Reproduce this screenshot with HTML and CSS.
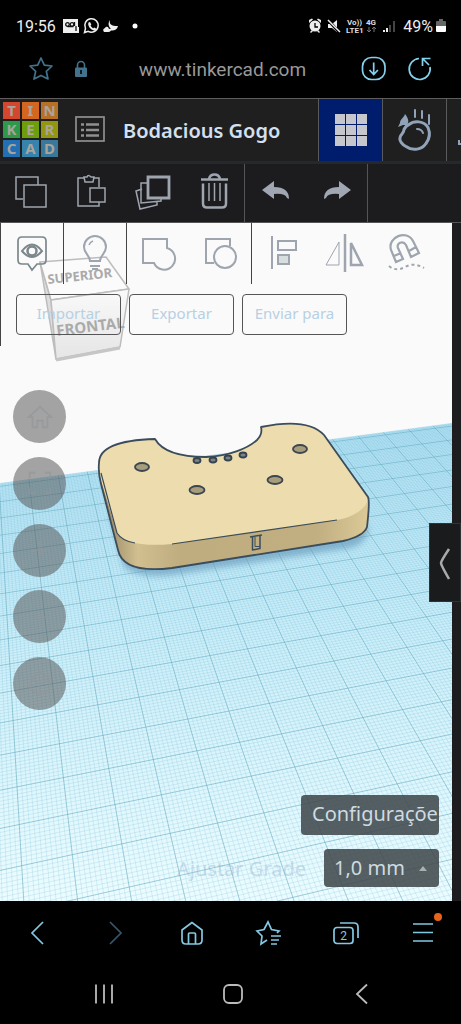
FILE: index.html
```html
<!DOCTYPE html>
<html lang="pt-BR">
<head>
<meta charset="utf-8">
<meta name="viewport" content="width=device-width, initial-scale=1">
<title>Bodacious Gogo</title>
<link rel="stylesheet" href="styles.css">
</head>
<body>
<div class="phone">
  <div class="status">
    <span class="clock">19:56</span>
    <svg class="status-left" viewBox="0 0 76 18" width="76" height="18">
      <path fill="#eee" d="M1 2h15v8h1v6H1z"/>
      <g fill="none" stroke="#111" stroke-width="1.3"><circle cx="5.500" cy="7.500" r="1.800"/><circle cx="10" cy="7.500" r="1.800"/><path d="M5.500 9.500h6M12.500 5v4M14 9v5"/></g>
      <g fill="none" stroke="#eee" stroke-width="1.500"><path d="M22.500 15.500l1-4a6.700 6.700 0 1 1 2.700 2.800z"/></g>
      <path fill="#eee" d="M26.500 5.500l1.500-.5 1.300 2.500-.8 1c.6 1.200 1.400 2 2.700 2.700l1-.8 2.300 1.300c-.3 1.600-1.500 2-2.700 1.700-3-.8-5.500-4-5.600-6.500z"/>
      <path fill="#eee" d="M48 3c-1 4 1 6 8 6-1 4-4 5-7 4.500q-1 1.500-3 1.500h-4q-2-3 1-4 1-2 3-1l1 2 2-.5c-3-2-3-6-1-8.500z"/>
      <circle cx="73" cy="9" r="2.500" fill="#fff"/>
    </svg>
    <svg class="status-right" viewBox="0 0 90 20" width="90" height="20">
      <g fill="#eee"><circle cx="8" cy="10" r="5.500"/><path d="M2 7V4l3-1.500 1 1zM14 7V4l-3-1.500-1 1zM3 16l2-2 1 1-2 2zM13 16l-2-2-1 1 2 2z"/></g>
      <path d="M8 7v4h3" fill="none" stroke="#000" stroke-width="1.300"/>
      <path fill="#eee" d="M21 8h4l5-4v12l-5-4h-4z"/><path d="M20 3l13 14" stroke="#000" stroke-width="3"/><path d="M21 4l12 12" stroke="#eee" stroke-width="1.500"/>
      <g class="tiny"><text x="40" y="9">Vo))</text><text x="39" y="17">LTE1</text><text x="59" y="9">4G</text></g>
      <path d="M62 11v5m-2-2 2 2 2-2M67 16v-5m-2 2 2-2 2 2" stroke="#777" fill="none"/>
      <g stroke-width="2"><path d="M77 16v-2M80 16v-4" stroke="#eee"/><path d="M83 16V9M87 16V5" stroke="#444"/></g>
    </svg>
    <span class="charge">49%</span>
    <svg viewBox="0 0 10 14" width="10" height="14"><path fill="#666" d="M0 3q0-1 1-1h2V0h4v2h2q1 0 1 1v4H0z"/><path fill="#fff" d="M0 7h10v5q0 1-1 1H1q-1 0-1-1z"/></svg>
  </div>

  <div class="address">
    <button aria-label="Favorito"><svg viewBox="0 0 26 26" width="26" height="26"><path d="M13 2l3.300 7.200 7.700.8-5.700 5.300L20 23l-7-3.600L6 23l1.700-7.700L2 10l7.700-.8z" fill="none" stroke="#42728c" stroke-width="1.700" stroke-linejoin="round"/></svg></button>
    <button aria-label="Segurança"><svg viewBox="0 0 14 18" width="14" height="18"><path d="M3.500 9V5a3.500 3.500 0 0 1 7 0v4" fill="none" stroke="#42728c" stroke-width="1.600"/><rect x="1" y="7.500" width="12" height="9.500" rx="1" fill="#42728c"/><path d="M7 10v4" stroke="#000" stroke-width="1.500"/></svg></button>
    <input class="url" type="text" aria-label="Endereço" value="www.tinkercad.com">
    <button aria-label="Baixar"><svg viewBox="0 0 26 26" width="26" height="26"><g fill="none" stroke="#85d2ee" stroke-width="1.700"><rect x="1.500" y="1.500" width="22.500" height="22" rx="9"/><path d="M12.700 6.500v12M8.500 14l4.200 4.500 4.200-4.500"/></g></svg></button>
    <button aria-label="Recarregar"><svg viewBox="0 0 26 26" width="26" height="26"><g fill="none" stroke="#85d2ee" stroke-width="1.700"><path d="M12 2.500A10.500 10.500 0 1 0 23 11M15.500 10V2.500h8M16 3l6 6"/></g></svg></button>
  </div>

  <header class="header">
    <a class="logo" href="#" aria-label="Tinkercad">
      <span class="t1">T</span><span class="t2">I</span><span class="t3">N</span>
      <span class="t4">K</span><span class="t5">E</span><span class="t6">R</span>
      <span class="t7">C</span><span class="t8">A</span><span class="t9">D</span>
    </a>
    <button class="list" aria-label="Projetos"><svg viewBox="0 0 30 28" width="30" height="28"><g fill="none" stroke="#909090" stroke-width="1.700"><rect x="1" y="2" width="28" height="24"/><path d="M11 9.500h13M11 15h13M11 20.500h13M6 9.500h3M6 15h3M6 20.500h3" stroke-width="2.600"/></g></svg></button>
    <h1>Bodacious Gogo</h1>
    <button class="mode on" aria-label="Projeto 3D"><svg viewBox="0 0 32 32" width="32" height="32"><path fill="#c5c7cd" d="M0 0h10v10H0zM11 0h10v10H11zM22 0h10v10H22zM0 11h10v10H0zM11 11h10v10H11zM22 11h10v10H22zM0 22h10v10H0zM11 22h10v10H11zM22 22h10v10H22z"/></svg></button>
    <button class="mode" aria-label="Laboratório"><svg viewBox="0 0 36 46" width="36" height="46"><g fill="none" stroke="#91a3b9" stroke-width="3" stroke-linecap="round"><path d="M12 17.500c5-4 15-4 19 3 3 7 1 12-2 16-4 6-13 8-20 3-4-2-7-6-6-9 1-4 4-4 4-8 1-2 2-4 5-5z"/><path d="M20 22c3 0 5 1 6 4" stroke-width="2"/><path d="M18 3v7M25 4v7M32 8v9" stroke-width="2"/></g><path fill="#91a3b9" d="M8 7c4 5 4 8 2 11H6l-5 2 2-4c0-4 4-5 5-9z"/></svg></button>
    <span class="next"><svg viewBox="0 0 14 46" width="14" height="46"><path d="M12 33v4h2" fill="none" stroke="#91a3b9" stroke-width="2"/></svg></span>
  </header>

  <div class="toolbar">
    <div class="group">
      <button class="tool" aria-label="Copiar"><svg viewBox="0 0 36 36"><path d="M10 25H3V3h22v8M11 11h22v22H11z" stroke-width="1.500"/></svg></button>
      <button class="tool" aria-label="Colar"><svg viewBox="0 0 36 36"><path d="M10 4H4v28h21v-4M20 4h5v9M10 3h3q1-3 4 0h3l-1 5h-8zM16 14h15v14H16z" stroke-width="1.500"/></svg></button>
      <button class="tool" aria-label="Duplicar"><svg viewBox="0 0 36 36"><path d="M13 3h21v21H13z" stroke-width="2.800"/><path d="M12 9H6v20l20-2v-2M7 15l-6 2 4 18 17-4v-3" stroke-width="1.500"/></svg></button>
      <button class="tool" aria-label="Excluir"><svg viewBox="0 0 36 36"><path d="M5 5.500h27M13 5q1-4.500 5.500-4.500T24 5" stroke-width="2.500"/><path d="M7 9.500v20q0 4 4 4h15q4 0 4-4v-20" stroke-width="2.500"/><path d="M13 9v18M18.500 9v18M24 9v18" stroke-width="1.500"/></svg></button>
    </div>
    <div class="group">
      <button class="tool" aria-label="Desfazer"><svg viewBox="0 0 36 36"><path fill="#a0a7b3" stroke="none" d="M4 16L16 7v6q15 0 15 12l-2-1q-2-5-13-4v5z"/></svg></button>
      <button class="tool" aria-label="Refazer"><svg viewBox="0 0 36 36"><path fill="#a0a7b3" stroke="none" d="M32 16L20 7v6Q5 13 5 25l2-1q2-5 13-4v5z"/></svg></button>
    </div>
  </div>

  <main class="workspace">
    <svg class="scene" viewBox="0 223 452 678" preserveAspectRatio="xMidYMid slice" role="img" aria-label="Plano de trabalho">
      <defs>
        <linearGradient id="plane" x1="0" y1="430" x2="0" y2="900" gradientUnits="userSpaceOnUse"><stop offset="0" stop-color="#b4e3f6"/><stop offset=".4" stop-color="#c9eefa"/><stop offset="1" stop-color="#ebfcff"/></linearGradient>
        <linearGradient id="side" x1="100" x2="370" gradientUnits="userSpaceOnUse" y1="0" y2="0"><stop offset="0" stop-color="#8f8060"/><stop offset=".14" stop-color="#d2bf90"/><stop offset=".3" stop-color="#bfac7f"/><stop offset=".8" stop-color="#c1ae81"/><stop offset="1" stop-color="#ddca98"/></linearGradient>
        <linearGradient id="cube" x1="0" x2="0" y1="0" y2="1"><stop offset="0" stop-color="#fafafa"/><stop offset="1" stop-color="#e5e5e5"/></linearGradient>
        <filter id="soft"><feGaussianBlur stdDeviation="3"/></filter>
      </defs>
      <rect x="-400" y="0" width="1200" height="1200" fill="#fafafa"/>
      <path id="ground" fill="url(#plane)"/>
      <path id="minor" fill="none" stroke="#6db4cf" stroke-opacity=".2" stroke-width="1"/>
      <path id="major" fill="none" stroke="#5ba4b9" stroke-opacity=".55" stroke-width="1"/>

      <path d="M110 515L124 567Q140 579 172 575L350 548Q369 543 368 525" fill="#6b9dbd" opacity=".7" filter="url(#soft)"/>
      <path d="M99 464L120 500L340 490L368 496Q370 500 368 527Q366 537 343 541L172 568Q123 575 118 550L101 484Z" fill="url(#side)"/>
      <path d="M99 463C99 448 118 440 155 439C163 453 185 457 206 457C230 456 248 448 257 440C262 435 262 431 261 427C290 421 312 422 324 435L368 497C368 508 354 517 337 520L172 544Q128 548 117 533L103 487Q98 474 99 463Z" fill="#ecdcae"/>
      <g fill="none" stroke="#3b4c5b" stroke-width="1.800" stroke-linejoin="round">
        <path d="M99 463C99 448 118 440 155 439C163 453 185 457 206 457C230 456 248 448 257 440C262 435 262 431 261 427C290 421 312 422 324 435L368 497Q370 501 367 527Q364 536 343 541L172 568Q123 574 118 550L101 484Q98 472 99 463Z"/>
        <path d="M101 473L117 533Q122 541 135 543M172 544L337 520" stroke-width="1.200"/>
        <path d="M250 537l12-2M252.500 537v13l7.500-1.500V536" stroke-width="1.500"/>
        <path d="M255 537v9.500h5" stroke-width="1"/>
      </g>
      <g fill="#a79d7b" stroke="#3b4650" stroke-width="1.800">
        <ellipse cx="142" cy="467" rx="7" ry="4"/><ellipse cx="197" cy="490" rx="7.500" ry="4"/><ellipse cx="275" cy="480" rx="7.500" ry="4"/><ellipse cx="300" cy="449" rx="7" ry="4"/>
      </g>
      <g fill="#7b8184" stroke="#34444f" stroke-width="1.800">
        <ellipse cx="197" cy="460.500" rx="3.500" ry="2.500"/><ellipse cx="213" cy="460" rx="3.500" ry="2.500"/><ellipse cx="228" cy="458" rx="3.500" ry="2.500"/><ellipse cx="243" cy="455" rx="3.500" ry="2.500"/>
      </g>

      <g stroke="#bdbdbd" stroke-width="1.500" stroke-linejoin="round">
        <path d="M40 262L51 300L56 359Z" fill="#ddd"/>
        <path d="M40 262L106 257L129 289L51 300Z" fill="#fbfbfb"/>
        <path d="M51 300L129 289L120 347L56 359Z" fill="url(#cube)"/>
        <path d="M56 360L120 348" stroke="#c6c6c6" stroke-width="3"/>
      </g>
      <g class="cube-text">
        <text x="48" y="284" font-size="13" transform="rotate(-6 48 284)">SUPERIOR</text>
        <text x="57" y="336" font-size="15" transform="rotate(-7 57 336)">FRONTAL</text>
      </g>
    </svg>

    <div class="overlay">
      <div class="edit">
        <div class="cell line"><button class="tool" aria-label="Mostrar"><svg viewBox="0 0 36 36"><g stroke="#7b878c"><path d="M8 1h20q4 0 4 4v19q0 4-4 4h-5l-5 6-4-6H8q-4 0-4-4V5q0-4 4-4z" stroke-width="1.700"/><path d="M8 15q10-13 20 0-10 12-20 0z" stroke-width="2"/><circle cx="18" cy="15" r="4.500" stroke-width="2.500"/></g></svg></button></div>
        <div class="cell line"><button class="tool" aria-label="Luz"><svg viewBox="0 0 36 36"><path d="M13 25c0-6-6-7-6-14a11 11 0 0 1 22 0c0 7-6 8-6 14zM13 30h10M15 33h6" stroke-width="2"/><path d="M12 9q1-3 4-4" stroke-width="1.500"/></svg></button></div>
        <div class="cell line"><button class="tool" aria-label="Agrupar"><svg viewBox="0 0 36 36"><path d="M3 3h24v9a11 11 0 1 1-13 15H3z" stroke-width="2"/></svg></button>
        <button class="tool" aria-label="Desagrupar"><svg viewBox="0 0 36 36"><path d="M12 27H4V3h24v7" stroke-width="2"/><circle cx="23" cy="21" r="11" stroke-width="2"/></svg></button></div>
        <div class="cell"><button class="tool" aria-label="Alinhar"><svg viewBox="0 0 36 36"><path d="M7 0v33" stroke-width="2"/><path d="M13 5h18v9H13z" stroke-width="2"/><path d="M13 19h11v9H13z" fill="#d8dde0" stroke-width="2"/></svg></button>
        <button class="tool wide" aria-label="Espelhar"><svg viewBox="0 0 40 40"><path d="M14 8v23H1z" stroke-width="1"/><path d="M20 0v38" stroke-width="2.500"/><path d="M26 9v22h11z" stroke-width="2.500"/></svg></button>
        <button class="tool wide" aria-label="Ímã"><svg viewBox="0 0 40 40"><path d="M9 28L4 16C0 3 20-5 26 7l6 12-8 4-5-12c-3-5-10-2-8 3l5 11zM7 22l7-3M22 17l7-4" stroke-width="2.200"/><path d="M2 32q7 6 16 1t19 1" stroke-width="2" stroke-dasharray="3 3"/></svg></button></div>
      </div>
      <div class="actions"><button>Importar</button><button>Exportar</button><button>Enviar para</button></div>
      <div class="views">
        <button aria-label="Início"><svg viewBox="0 0 28 28"><path d="M2 14L14 3l12 11h-4v11h-5v-7h-6v7H6V14z"/></svg></button>
        <button aria-label="Ajustar"><svg viewBox="0 0 28 28"><path d="M3 9V3h6M19 3h6v6M25 19v6h-6M9 25H3v-6"/></svg></button>
        <button aria-label="Aproximar"><svg viewBox="0 0 28 28"><path d="M4 14h20M14 4v20"/></svg></button>
        <button aria-label="Afastar"><svg viewBox="0 0 28 28"><path d="M4 14h20"/></svg></button>
        <button aria-label="Perspectiva"><svg viewBox="0 0 28 28"><path d="M14 2l10 6v12l-10 6-10-6V8zM4 8l10 6 10-6M14 14v12"/></svg></button>
      </div>
      <div class="settings">
        <button class="config">Configuraçõe</button>
        <div class="snap">
          <label for="grid">Ajustar Grade</label>
          <div class="select"><select id="grid"><option>1,0 mm</option></select><svg viewBox="0 0 8 5" width="8" height="5"><path d="M0 5l4-5 4 5z" fill="#a9b0b3"/></svg></div>
        </div>
      </div>
    </div>
    <div class="rail"></div>
    <button class="drawer" aria-label="Abrir painel"><svg viewBox="0 0 14 36" width="14" height="36"><path d="M11 4Q3 16 3 18t8 16" fill="none" stroke="#aaa" stroke-width="2.500"/></svg></button>
  </main>

  <nav class="browser">
    <button aria-label="Voltar"><svg viewBox="0 0 28 28"><path d="M19 3L8 14l11 11"/></svg></button>
    <button class="dim" aria-label="Avançar"><svg viewBox="0 0 28 28"><path d="M9 3l11 11L9 25"/></svg></button>
    <button aria-label="Página inicial"><svg viewBox="0 0 28 28"><path d="M14 3.500L4 11v10q0 4 4 4h12q4 0 4-4V11zM10.500 25V15q0-1 1-1h5q1 0 1 1v10"/></svg></button>
    <button aria-label="Favoritos"><svg viewBox="0 0 28 28"><path d="M12 21l-6 4 1-8-5-5 7-1.500L13 3l3.500 7.500L24 12l-2 2M16 17h10M16 21h8M16 25h6"/></svg></button>
    <button aria-label="Abas"><svg viewBox="0 0 28 28"><rect x="2" y="8.500" width="19" height="16" rx="3"/><path d="M8 4h14q4 0 4 4v11"/><text x="11.500" y="21">2</text></svg></button>
    <button aria-label="Menu"><svg class="menu" viewBox="0 0 28 28"><path d="M4 5h20M4 13.500h20M4 22h20"/><circle cx="29" cy="-2" r="4"/></svg></button>
  </nav>
  <nav class="system">
    <button aria-label="Recentes"><svg viewBox="0 0 24 24"><path d="M4 2.500v19M12 2.500v19M20 2.500v19"/></svg></button>
    <button aria-label="Início do sistema"><svg viewBox="0 0 24 24"><rect x="3" y="3" width="18" height="18" rx="5"/></svg></button>
    <button aria-label="Voltar do sistema"><svg viewBox="0 0 24 24"><path d="M17 2.500L7 12l10 9.500"/></svg></button>
  </nav>
</div>
<script src="grid.js"></script>
</body>
</html>
```
FILE: styles.css
```css
* { box-sizing: border-box; }
body { margin: 0; background: #000; font-family: "Noto Sans", "Open Sans", sans-serif; }
button { margin: 0; padding: 0; border: 0; background: none; color: inherit; font: inherit; }
svg { display: block; overflow: visible; }
.phone { min-height: 100vh; display: flex; flex-direction: column; overflow: hidden; }

.status { display: flex; align-items: center; height: 52px; padding: 0 15px 0 16px; color: #eee; font: 16px Roboto, sans-serif; }
.status-left { margin-left: 6px; }
.status-right { margin-left: auto; margin-right: 6px; }
.charge { margin-right: 3px; }
.tiny { font: bold 8px Roboto, sans-serif; fill: #ddd; }

.address { display: flex; align-items: center; height: 46px; padding: 0 28px; padding-bottom: 12px; }
.address button + button { margin-left: 20px; }
.url { flex: 1; min-width: 0; margin: 0 16px 0 12px; border: 0; padding: 0; background: none; color: #999; font: 19px Roboto, sans-serif; text-align: center; }

.header { display: flex; height: 63px; border-top: 1px solid #5e5e5e; background: #1f1f20; }
.logo { display: grid; grid-template-columns: repeat(3, 17px); grid-auto-rows: 17px; gap: 2px; padding: 3px; text-decoration: none; font: bold 15px/17px "Noto Sans", sans-serif; text-align: center; color: #a9a49c; }
.t1 { background: #d3472f; } .t2 { background: #d4661f; } .t3 { background: #b87026; }
.t4 { background: #2d9a4b; } .t5 { background: #6d9e0b; } .t6 { background: #93960f; }
.t7 { background: #2270b3; } .t8 { background: #3683ad; } .t9 { background: #39789a; }
.list { margin: 0 18px 2px 14px; }
.header h1 { flex: 1; align-self: center; margin: 0; color: #d2e0f0; font-size: 20px; font-weight: 600; white-space: nowrap; }
.mode { display: grid; place-items: center; width: 64px; border-left: 1px solid #5a5a5c; }
.on { background: #001c6c; }
.next { display: grid; align-items: center; width: 15px; border-left: 1px solid #5a5a5c; }

.toolbar { display: flex; height: 62px; background: #1c1c1f; border-top: 3px solid #25282c; border-bottom: 1px solid #555; }
.group { display: flex; border-right: 1px solid #555558; }
.group .tool { width: 61px; }
.group .tool svg { margin-bottom: 2px; }
.tool { display: grid; place-items: center; width: 62px; }
.tool svg { width: 36px; height: 36px; fill: none; stroke: #9ea5ae; }
.tool.wide svg { width: 40px; height: 40px; }

.workspace { position: relative; flex: 1; display: grid; grid-template-columns: 1fr 9px; min-height: 678px; }
.scene { grid-area: 1 / 1; width: 100%; height: 100%; min-height: 0; overflow: hidden; }
.overlay { grid-area: 1 / 1; z-index: 1; display: flex; flex-direction: column; min-width: 0; }
.rail { grid-area: 1 / 2; background: #1d1d1f; z-index: 1; }
.cube-text { fill: #aaa; font-family: "Noto Sans", sans-serif; font-weight: 700; }
.edit { display: flex; height: 61px; border-left: 1px solid #444; }
.cell { display: flex; }
.line { border-right: 1px solid #444; }
.cell .tool { height: 61px; }
.actions { display: flex; gap: 8px; height: 62px; padding: 10px 15px 11px; border-left: 1px solid #444; }
.actions button { width: 105px; padding-bottom: 3px; border: 1px solid #555; border-radius: 4px; color: #b8d0e2; font-size: 15px; }
.views { display: flex; flex-direction: column; justify-content: space-between; height: 320px; margin: 44px 0 0 13px; }
.views button { display: grid; place-items: center; width: 53px; height: 53px; border-radius: 50%; background: rgba(88, 88, 88, .54); }
.views svg { width: 26px; height: 26px; fill: none; stroke: rgba(145, 150, 155, .6); stroke-width: 2; }
.settings { display: flex; flex-direction: column; align-items: flex-end; gap: 14px; margin-top: auto; padding: 0 13px 14px; color: #cfdbe0; font-size: 20px; }
.config { width: 138px; height: 40px; padding: 0 0 3px 11px; border-radius: 4px; background: rgba(62, 70, 73, .86); text-align: left; white-space: nowrap; overflow: hidden; }
.snap { display: flex; align-items: center; gap: 18px; }
.snap label { color: rgba(145, 175, 205, .4); }
.select { position: relative; }
.select select { display: block; width: 115px; height: 38px; padding: 0 10px 2px; border: 0; border-radius: 4px; appearance: none; background: rgba(62, 70, 73, .86); color: inherit; font: inherit; }
.select svg { position: absolute; right: 12px; top: 17px; }
.drawer { position: absolute; z-index: 2; right: 0; top: 300px; display: grid; place-items: center; width: 32px; height: 79px; background: #1a1b1d; border: 1px solid #303336; }

.browser { display: grid; grid-template-columns: repeat(6, 1fr); height: 63px; }
.browser button, .system button { display: grid; place-items: center; }
.browser svg { width: 28px; height: 28px; fill: none; stroke: #85c8e2; stroke-width: 1.7px; }
.browser .dim svg { stroke: #38566a; }
.browser text { fill: #85c8e2; stroke: none; font: 12px Roboto, sans-serif; text-anchor: middle; }
.browser .menu circle { fill: #e8641c; stroke: none; }
.system { display: grid; grid-template-columns: repeat(3, 129px); justify-content: center; height: 60px; padding-left: 4px; }
.system svg { width: 24px; height: 24px; fill: none; stroke: #bbb; stroke-width: 1.8px; }
```
FILE: grid.js
```js
// Projects workplane coordinates (one unit per major cell) to scene coordinates.
function project(i, j) {
  const w = 1 + 0.00992 * i - 0.04125 * j;
  return ((45.06 * i + 1.338 * j + 15) / w).toFixed(2) + " " +
    ((-1.19 * i + 2.09 * j + 752.3) / w).toFixed(2);
}
const left = -4, right = 24, back = -12.2, front = 7;
const segment = (a, b, c, d) => "M" + project(a, b) + "L" + project(c, d);
let minor = "", major = "";
for (let n = left * 10; n <= right * 10; n++) {
  const s = segment(n / 10, back, n / 10, front);
  if (n % 10 === 0) major += s; else minor += s;
}
for (let n = -122; n <= front * 10; n++) {
  const s = segment(left, n / 10, right, n / 10);
  if (n % 10 === 0) major += s; else minor += s;
}
document.getElementById("ground").setAttribute("d",
  "M" + project(left, back) + "L" + project(right, back) + "L" + project(right, front) + "L" + project(left, front) + "Z");
document.getElementById("minor").setAttribute("d", minor);
document.getElementById("major").setAttribute("d", major);
```
